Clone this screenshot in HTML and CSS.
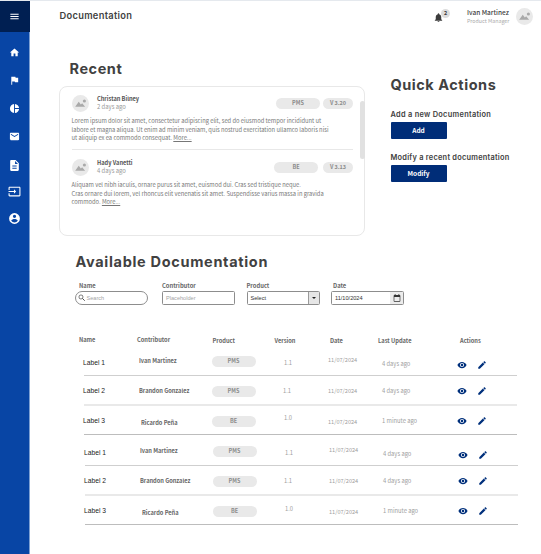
FILE: index.html
```html
<!DOCTYPE html>
<html lang="en">
<head>
<meta charset="utf-8">
<title>Documentation</title>
<link rel="stylesheet" href="styles.css">
</head>
<body>
<svg class="defs" aria-hidden="true">
  <symbol id="menu" viewBox="0 0 24 24"><path d="M3 18h18v-2H3v2zm0-5h18v-2H3v2zm0-7v2h18V6H3z"/></symbol>
  <symbol id="home" viewBox="0 0 24 24"><path d="M10 20v-6h4v6h5v-8h3L12 3 2 12h3v8z"/></symbol>
  <symbol id="flag" viewBox="0 0 24 24"><path d="M14.4 6 14 4H5v17h2v-7h5.600l.4 2h7V6z"/></symbol>
  <symbol id="pie" viewBox="0 0 24 24"><path d="M11 2v20c-5.070-.5-9-4.790-9-10s3.930-9.500 9-10zm2.030 0v8.990H22c-.47-4.740-4.240-8.520-8.970-8.990zm0 11.010V22c4.740-.47 8.500-4.250 8.970-8.990h-8.970z"/></symbol>
  <symbol id="mail" viewBox="0 0 24 24"><path d="M20 4H4c-1.100 0-2 .9-2 2v12c0 1.100.9 2 2 2h16c1.100 0 2-.9 2-2V6c0-1.100-.9-2-2-2zm0 4-8 5-8-5V6l8 5 8-5v2z"/></symbol>
  <symbol id="doc" viewBox="0 0 24 24"><path d="M14 2H6c-1.100 0-2 .9-2 2v16c0 1.100.9 2 2 2h12c1.100 0 2-.9 2-2V8l-6-6zm2 16H8v-2h8v2zm0-4H8v-2h8v2zm-3-5V3.500L18.500 9H13z"/></symbol>
  <symbol id="input" viewBox="0 0 24 24"><path d="M21 3H3c-1.100 0-2 .9-2 2v4h2V5h18v14H3v-4H1v4c0 1.100.9 2 2 2h18c1.100 0 2-.9 2-2V5c0-1.100-.9-2-2-2zM11 16l4-4-4-4v3H1v2h10v3z"/></symbol>
  <symbol id="account" viewBox="0 0 24 24"><path d="M12 2a10 10 0 1 0 0 20 10 10 0 0 0 0-20zm0 3a3 3 0 1 1 0 6 3 3 0 0 1 0-6zm0 14.200a7.200 7.200 0 0 1-6-3.220c.03-1.990 4-3.080 6-3.080s5.970 1.090 6 3.080a7.200 7.200 0 0 1-6 3.220z"/></symbol>
  <symbol id="bell" viewBox="0 0 24 24"><path d="M12 22c1.100 0 2-.9 2-2h-4c0 1.100.9 2 2 2zm6-6v-5c0-3.070-1.630-5.640-4.500-6.320V4a1.500 1.500 0 0 0-3 0v.68C7.640 5.360 6 7.920 6 11v5l-2 2v1h16v-1l-2-2z"/></symbol>
  <symbol id="photo" viewBox="0 0 24 24"><circle cx="12" cy="12" r="12" fill="#e9e9e9"/><path fill="#a9a9a9" d="M4.500 16.500 9.500 9.500l3 4 1.800-2 4.200 5z"/><circle cx="17.500" cy="8.500" r="2.200" fill="#a9a9a9"/></symbol>
  <symbol id="search" viewBox="0 0 24 24"><circle cx="9.500" cy="9.500" r="6.500" fill="none" stroke="#333" stroke-width="2"/><path d="m14.500 14.500 7 7" stroke="#333" stroke-width="2.800"/></symbol>
  <symbol id="calendar" viewBox="0 0 24 24"><path d="M20 3h-1V1h-3v2H8V1H5v2H4a2 2 0 0 0-2 2v16c0 1.100.9 2 2 2h16c1.100 0 2-.9 2-2V5c0-1.100-.9-2-2-2zm0 18H4V9h16v12z"/></symbol>
  <symbol id="eye" viewBox="0 0 24 24"><path d="M12 4.500C7 4.500 2.730 7.610 1 12c1.730 4.390 6 7.500 11 7.500s9.270-3.110 11-7.500c-1.730-4.390-6-7.500-11-7.500zM12 17a5 5 0 1 1 0-10 5 5 0 0 1 0 10zm0-8a3 3 0 1 0 0 6 3 3 0 0 0 0-6z"/></symbol>
  <symbol id="pencil" viewBox="0 0 24 24"><path d="M3 17.250V21h3.750L17.810 9.940l-3.750-3.750L3 17.250zM20.710 7.040a1 1 0 0 0 0-1.410l-2.340-2.340a1 1 0 0 0-1.410 0l-1.830 1.830 3.750 3.750 1.830-1.830z"/></symbol>
</svg>

<div class="app">
  <nav class="sidebar">
    <div class="menu"><svg class="i11"><use href="#menu"/></svg></div>
    <div class="links">
      <svg class="i11"><use href="#home"/></svg>
      <svg class="i11"><use href="#flag"/></svg>
      <svg class="i11"><use href="#pie"/></svg>
      <svg class="i11"><use href="#mail"/></svg>
      <svg class="i13 doc"><use href="#doc"/></svg>
      <svg class="i13"><use href="#input"/></svg>
      <svg class="i13 account"><use href="#account"/></svg>
    </div>
  </nav>

  <main class="main">
    <header class="header">
      <h1>Documentation</h1>
      <div class="bell"><svg><use href="#bell"/></svg><span class="badge">2</span></div>
      <div class="user"><b>Ivan Martinez</b><span>Product Manager</span></div>
      <svg class="avatar"><use href="#photo"/></svg>
    </header>

    <div class="top">
      <section class="recent">
        <h2>Recent</h2>
        <div class="card">
          <article class="post">
            <div class="post-head">
              <svg class="avatar"><use href="#photo"/></svg>
              <div class="who"><b>Christan Bilney</b><span>2 days ago</span></div>
              <span class="pill">PMS</span><span class="pill ver">V 3.20</span>
            </div>
            <p>Lorem ipsum dolor sit amet, consectetur adipiscing elit, sed do eiusmod tempor incididunt ut<br>labore et magna aliqua. Ut enim ad minim veniam, quis nostrud exercitation ullamco laboris nisi<br>ut aliquip ex ea commodo consequat. <u>More...</u></p>
          </article>
          <article class="post second">
            <div class="post-head">
              <svg class="avatar"><use href="#photo"/></svg>
              <div class="who"><b>Hady Vanetti</b><span>4 days ago</span></div>
              <span class="pill">BE</span><span class="pill ver">V 3.13</span>
            </div>
            <p>Aliquam vel nibh iaculis, ornare purus sit amet, euismod dui. Cras sed tristique neque.<br>Cras ornare dui lorem, vel rhoncus elit venenatis sit amet. Suspendisse varius massa in gravida<br>commodo. <u>More...</u></p>
          </article>
          <div class="thumb"></div>
        </div>
      </section>
      <section class="quick">
        <h2>Quick Actions</h2>
        <h3 class="h-add">Add a new Documentation</h3>
        <button>Add</button>
        <h3 class="h-mod">Modify a recent documentation</h3>
        <button>Modify</button>
      </section>
    </div>

    <section class="available">
      <h2>Available Documentation</h2>
      <div class="filters">
        <div class="field"><label>Name</label><div class="box round"><svg><use href="#search"/></svg><span>Search</span></div></div>
        <div class="field"><label>Contributor</label><div class="box plain"><span>Placeholder</span></div></div>
        <div class="field"><label>Product</label><div class="box select"><span>Select</span><i class="arrow"></i></div></div>
        <div class="field"><label>Date</label><div class="box date"><span>11/10/2024</span><i class="cal"><svg><use href="#calendar"/></svg></i></div></div>
      </div>

      <div class="table">
        <div class="row head"><span>Name</span><span>Contributor</span><span>Product</span><span>Version</span><span>Date</span><span>Last Update</span><span>Actions</span></div>
        <div class="row a"><span class="label">Label 1</span><b>Ivan Martinez</b><span class="pill">PMS</span><span class="v">1.1</span><span class="d">11/07/2024</span><span class="u">4 days ago</span><svg><use href="#eye"/></svg><svg><use href="#pencil"/></svg></div>
        <div class="row b"><span class="label">Label 2</span><b>Brandon Gonzalez</b><span class="pill">PMS</span><span class="v">1.1</span><span class="d">11/07/2024</span><span class="u">4 days ago</span><svg><use href="#eye"/></svg><svg><use href="#pencil"/></svg></div>
        <div class="row c"><span class="label">Label 3</span><b>Ricardo Peña</b><span class="pill">BE</span><span class="v">1.0</span><span class="d">11/07/2024</span><span class="u">1 minute ago</span><svg><use href="#eye"/></svg><svg><use href="#pencil"/></svg></div>
        <div class="row a shift"><span class="label">Label 1</span><b>Ivan Martinez</b><span class="pill">PMS</span><span class="v">1.1</span><span class="d">11/07/2024</span><span class="u">4 days ago</span><svg><use href="#eye"/></svg><svg><use href="#pencil"/></svg></div>
        <div class="row b shift tall"><span class="label">Label 2</span><b>Brandon Gonzalez</b><span class="pill">PMS</span><span class="v">1.1</span><span class="d">11/07/2024</span><span class="u">4 days ago</span><svg><use href="#eye"/></svg><svg><use href="#pencil"/></svg></div>
        <div class="row c shift last"><span class="label">Label 3</span><b>Ricardo Peña</b><span class="pill">BE</span><span class="v">1.0</span><span class="d">11/07/2024</span><span class="u">1 minute ago</span><svg><use href="#eye"/></svg><svg><use href="#pencil"/></svg></div>
      </div>
    </section>
  </main>
</div>
</body>
</html>
```
FILE: styles.css
```css
* { box-sizing: border-box; }
body {
  margin: 0;
  background: #fff;
  color: #666;
  font: 5.800px/8px "Noto Sans CJK SC", "Noto Sans", sans-serif;
  overflow: hidden;
}
h1, h2, h3, p { margin: 0; }
h1, h2, h3 { font-family: Inter, "Open Sans", sans-serif; color: #414141; white-space: nowrap; }
h2 { font-size: 14.500px; line-height: 18px; font-weight: 700; letter-spacing: .55px; }
svg { display: block; fill: currentColor; flex: none; }
.defs { position: absolute; width: 0; height: 0; }
.app { display: flex; width: 541px; height: 554px; border-top: 1px solid #e5e9ee; }

.sidebar { width: 30px; flex: none; background: #0845a5; color: #fff; border-right: 1px solid #7d9fd2; }
.menu { height: 31px; background: #001f52; display: flex; justify-content: center; align-items: center; margin-right: -1px; padding-right: 1px; }
.links { display: flex; flex-direction: column; align-items: center; padding-top: 14.500px; gap: 17px; }
.i11 { width: 11px; height: 11px; }
.i13 { width: 13px; height: 13px; }
.doc { margin-bottom: -4px; }
.account { margin-top: -3px; }

.main { flex: 1; min-width: 0; }
.header { display: flex; height: 54px; padding-left: 29.500px; }
h1 { font-size: 9.300px; line-height: 12px; font-weight: 600; letter-spacing: .3px; margin-top: 9px; width: 373.500px; }
.bell { position: relative; width: 34px; padding-top: 11px; color: #3c3c3c; }
.bell svg { width: 11px; height: 11px; }
.badge { position: absolute; left: 8px; top: 8px; width: 9px; height: 9px; border-radius: 50%; background: #dcdcdc; font-size: 5.500px; line-height: 9px; text-align: center; font-weight: 700; }
.user { width: 49px; padding-top: 7px; line-height: 9px; display: flex; flex-direction: column; white-space: nowrap; }
.user b { font-size: 6.500px; font-weight: 500; color: #444; }
.user span { font-size: 5.300px; line-height: 8px; color: #aaa; }
.avatar { width: 17px; height: 17px; }
.header > .avatar { margin-top: 7px; }

.top { display: flex; height: 181px; }
.recent { width: 360.500px; padding-left: 29px; }
.recent h2 { padding: 5px 0 0 10.500px; height: 31px; }
.card { position: relative; width: 306px; height: 150px; border: 1px solid #e8e8e8; border-radius: 8px; padding: 8px 11px 8px 11.500px; }
.post { height: 55px; border-bottom: 1px solid #e8e8e8; }
.second { margin-top: 9px; border: 0; }
.post-head { display: flex; height: 22px; }
.post-head .avatar { margin-right: 8.500px; }
.who { flex: 1; display: flex; flex-direction: column; white-space: nowrap; font-size: 5.900px; }
.who b { font-size: 5.650px; color: #555; font-weight: 700; }
.who span { color: #999; }
.pill { display: block; width: 44px; height: 11px; border-radius: 6px; background: #e9e9e9; color: #8c8c8c; font-size: 5.500px; line-height: 11px; font-weight: 700; text-align: center; }
.post-head .pill { margin-top: 3px; margin-right: 3px; }
.second .post-head .pill:not(.ver) { margin-right: 5px; }
.post-head .ver { width: 30px; margin-right: 0; }
.post p { color: #777; font-size: 5.770px; line-height: 8.500px; white-space: nowrap; }
.thumb { position: absolute; right: -1px; top: 14px; width: 5px; height: 58px; border-radius: 3px; background: #e1e1e1; }

.quick { padding-top: 21px; }
.quick h2 { height: 31px; letter-spacing: .53px; }
h3 { font-size: 7.400px; line-height: 10px; font-weight: 600; letter-spacing: .29px; padding-top: 3px; height: 15px; }
.h-mod { margin-top: 11px; letter-spacing: .25px; }
button { display: block; width: 56px; height: 17px; border: 0; border-radius: 1px; padding: 0; background: #002d78; color: #fff; font: 700 6.500px/17px "Noto Sans CJK SC", sans-serif; }

.available h2 { padding: 17px 0 0 45.500px; height: 45px; letter-spacing: .68px; }
.filters { display: flex; padding-left: 45px; height: 55px; }
.field { width: 87px; }
.field:nth-child(2), .field:nth-child(3) { width: 84.500px; }
label { display: block; height: 10px; padding: 1px 0 0 4px; font-weight: 700; }
.field:nth-child(2) label, .field:nth-child(3) label { padding-left: 0; }
.field:nth-child(4) label { padding-left: 2px; }
.box { display: flex; align-items: center; width: 73px; height: 14px; border: 1px solid #8d8d8d; border-radius: 1.500px; font: 5.600px/12px "Liberation Sans", Arial, sans-serif; color: #a5a5a5; }
.round { border-radius: 7px; padding-left: 2px; }
.round svg { width: 7.500px; height: 7.500px; margin-right: 1px; }
.plain { padding-left: 3px; }
.select, .date { color: #333; padding-left: 3px; justify-content: space-between; }
.arrow { width: 11px; height: 12px; background: #e6e6e6; border-left: 1px solid #9a9a9a; display: flex; align-items: center; justify-content: center; }
.arrow::after { content: ""; border: 2px solid transparent; border-top-color: #222; border-bottom: 0; }
.cal { width: 13px; height: 12px; background: #ececec; display: flex; align-items: center; justify-content: center; color: #333; }
.cal svg { width: 8px; height: 8px; }

.table { padding-left: 49px; }
.row { position: relative; display: grid; grid-template-columns: 60px 73.500px 67.500px 44px 54px 75.500px 20px 20px; align-items: start; line-height: 8px; height: 31px; padding-left: 4px; margin-right: 24px; white-space: nowrap; }
.row::after { content: ""; position: absolute; left: 5px; right: 0; bottom: 0; height: 1px; background: #cfcfcf; }
.head { height: 9px; padding-left: 0; grid-template-columns: 58px 75.500px 62px 55.500px 48px 82px 40px; font-size: 5.700px; font-weight: 700; }
.head span:nth-child(n+3) { margin-top: 1px; }
.head::after { display: none; }
.shift { padding-left: 5px; margin-right: 23px; }
.shift::after { left: 6px; }
.label { font: 6.700px/8px "Liberation Sans", Arial, sans-serif; color: #222; margin-top: 14px; }
.row b { font-size: 5.650px; font-weight: 700; color: #666; margin-left: -4px; }
.v, .d, .u { color: #a0a0a0; }
.d { font-size: 5.600px; }
.row svg { width: 10px; height: 10px; color: #00307c; margin-left: -1px; margin-top: 15px; }
.row .pill { margin-top: 10px; margin-left: -5px; }
.row.a .pill { margin-top: 11px; }
.a b { margin-top: 12px; }
.a .v { margin-top: 14px; }
.a .d { margin-top: 11px; }
.a .u { margin-top: 15px; }
.b { height: 29px; }
.tall { height: 30px; }
.b::after { background: #e9e9e9; height: 2px; bottom: -1px; }
.tall::after { bottom: 0; }
.b .label, .b b, .b .v, .b .d, .b .u { margin-top: 11px; }
.b .v { margin-left: -1px; }
.b svg { margin-top: 10px; }
.c { height: 30px; }
.last { height: 29px; }
.c::after { background: #bdbdbd; }
.c .label { margin-top: 12px; }
.row.c b { margin-top: 14px; margin-left: -2px; }
.row.c .pill { margin-top: 11px; }
.c .v { margin-top: 9px; }
.c .d { margin-top: 13px; }
.c .u { margin-top: 12px; }
.c svg { margin-top: 11px; }
.last .label { margin-top: 11px; }
.row.last .pill { margin-top: 10px; }
.row.last b { margin-top: 13px; }
.last .d { margin-top: 12px; }
.last .u { margin-top: 11px; }
.last svg { margin-top: 10px; }
```
